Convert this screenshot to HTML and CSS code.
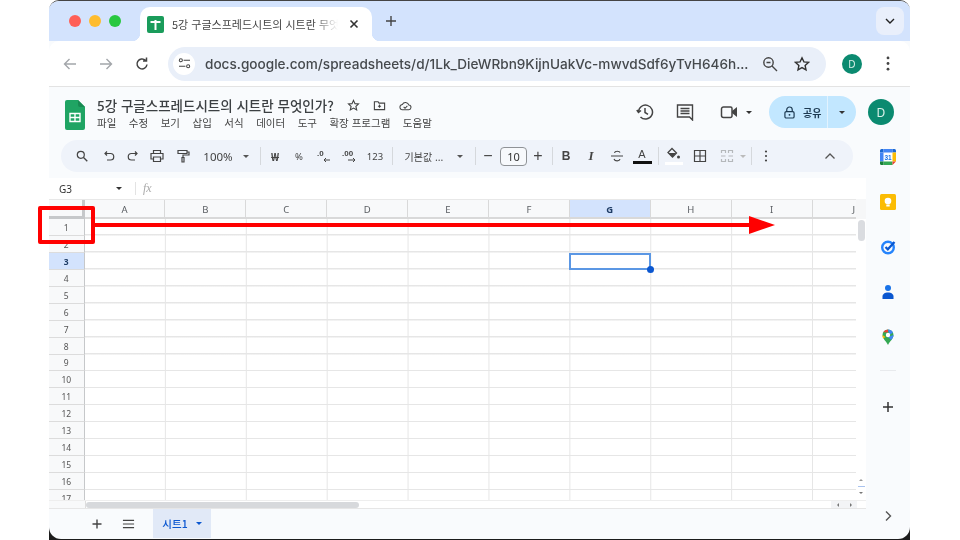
FILE: index.html
```html
<!DOCTYPE html>
<html lang="ko">
<head>
<meta charset="utf-8">
<title>5강 구글스프레드시트의 시트란 무엇인가?</title>
<link rel="stylesheet" href="styles.css">
</head>
<body>
<div class="screen">
  <div class="window">
    <div class="tabstrip">
      <div class="lights"><i class="light red"></i><i class="light yellow"></i><i class="light green"></i></div>
      <div class="tab">
        <svg class="favicon" viewBox="0 0 17 17"><rect width="17" height="17" rx="2" fill="#1a9c5b"/><path d="M3.5 6h10M8.5 4v10" stroke="#fff" stroke-width="2" fill="none"/></svg>
        <span class="tab-title">5강 구글스프레드시트의 시트란 무엇인가?</span>
        <svg class="tab-close" viewBox="0 0 10 10"><path d="M1.5 1.5l7 7M8.5 1.5l-7 7" stroke="#333" stroke-width="1.6" fill="none"/></svg>
      </div>
      <svg class="tab-new" viewBox="0 0 12 12"><path d="M6 1v10M1 6h10" stroke="#444" stroke-width="1.4" fill="none"/></svg>
      <div class="tab-menu"><svg viewBox="0 0 10 6"><path d="M1 1l4 4 4-4" stroke="#222" stroke-width="1.4" fill="none"/></svg></div>
    </div>

    <div class="navbar">
      <svg class="nav-ico" viewBox="0 0 16 16"><path d="M14 8H2.5M7.5 3l-5 5 5 5" stroke="#a3a6aa" stroke-width="1.4" fill="none"/></svg>
      <svg class="nav-ico" viewBox="0 0 16 16"><path d="M2 8h11.5M8.500 3l5 5-5 5" stroke="#a3a6aa" stroke-width="1.4" fill="none"/></svg>
      <svg class="nav-ico" viewBox="0 0 16 16"><path d="M13 8.500a5 5 0 1 1-1.500-4.200M12.500 1.500v3.500H9" stroke="#444" stroke-width="1.5" fill="none"/></svg>
      <div class="omnibox">
        <span class="site-btn"><svg viewBox="0 0 14 12"><circle cx="3" cy="2.500" r="1.700" fill="none" stroke="#444" stroke-width="1.100"/><path d="M6 2.500h7M1 9h7" stroke="#444" stroke-width="1.200"/><circle cx="11" cy="9" r="1.700" fill="none" stroke="#444" stroke-width="1.100"/></svg></span>
        <span class="url">docs.google.com/spreadsheets/d/1Lk_DieWRbn9KijnUakVc-mwvdSdf6yTvH646h...</span>
        <svg class="omni-ico" viewBox="0 0 16 16"><circle cx="6.500" cy="6.500" r="4.700" fill="none" stroke="#444" stroke-width="1.400"/><path d="M10 10l5 5M4.500 6.500h4" stroke="#444" stroke-width="1.400" fill="none"/></svg>
        <svg class="omni-ico" viewBox="0 0 16 16"><path d="M8 1.800l1.900 4.100 4.500.5-3.300 3 .9 4.400L8 11.600l-4 2.200.9-4.400-3.300-3 4.500-.5z" fill="none" stroke="#333" stroke-width="1.400"/></svg>
      </div>
      <span class="avatar small">D</span>
      <svg class="kebab" viewBox="0 0 4 16"><circle cx="2" cy="2" r="1.500" fill="#444"/><circle cx="2" cy="8" r="1.500" fill="#444"/><circle cx="2" cy="14" r="1.500" fill="#444"/></svg>
    </div>

    <div class="app">
      <header class="docbar">
        <svg class="logo" viewBox="0 0 20 30"><path d="M2 0h11l7 7v21a2 2 0 0 1-2 2H2a2 2 0 0 1-2-2V2a2 2 0 0 1 2-2z" fill="#1fa463"/><path d="M13 0l7 7h-5a2 2 0 0 1-2-2z" fill="#188a52"/><path d="M5 13.500h10v8H5zM5 17.500h10M10 13.500v8" fill="none" stroke="#fff" stroke-width="1.400"/></svg>
        <div class="docinfo">
          <div class="titleline">
            <span class="doctitle">5강 구글스프레드시트의 시트란 무엇인가?</span>
            <svg class="title-ico" viewBox="0 0 14 14"><path d="M7 1.500l1.600 3.500 3.800.4-2.800 2.600.8 3.700L7 9.800l-3.400 1.900.8-3.700-2.800-2.600 3.800-.4z" fill="none" stroke="#444" stroke-width="1.200"/></svg>
            <svg class="title-ico" viewBox="0 0 14 14"><path d="M1.500 3h4l1 1.500h6v7h-11zM7 6v3.500M5.300 7.800H8.700" fill="none" stroke="#444" stroke-width="1.200"/></svg>
            <svg class="title-ico" viewBox="0 0 14 14"><path d="M4 11.500a2.800 2.800 0 0 1-.4-5.600 3.700 3.700 0 0 1 7 .6 2.500 2.500 0 0 1-.4 5zM5 8.500l1.500 1.500 2.500-2.500" fill="none" stroke="#444" stroke-width="1.100"/></svg>
          </div>
          <nav class="menubar"><span>파일</span><span>수정</span><span>보기</span><span>삽입</span><span>서식</span><span>데이터</span><span>도구</span><span>확장 프로그램</span><span>도움말</span></nav>
        </div>
        <div class="docactions">
          <svg class="act history" viewBox="0 0 18 18"><path d="M2.500 9a7 7 0 1 1 2 5M.8 7l1.700 2.500L5 7.500M9 5v4.500l3 1.800" fill="none" stroke="#444" stroke-width="1.500"/></svg>
          <svg class="act comment" viewBox="0 0 18 18"><path d="M1.500 2h15v15l-3-3h-12zM4.500 5.500h9M4.500 8h9M4.500 10.500h9" fill="none" stroke="#444" stroke-width="1.400"/></svg>
          <svg class="act video" viewBox="0 0 18 14"><path d="M1.500 4a2 2 0 0 1 2-2h7a1.500 1.500 0 0 1 1.500 1.500V11a1.500 1.500 0 0 1-1.500 1.500h-7a2 2 0 0 1-2-2z" fill="none" stroke="#444" stroke-width="1.500"/><path d="M12 6l5-4v10l-5-4z" fill="#444"/></svg>
          <i class="caret dark video-caret"></i>
          <div class="share">
            <span class="share-main">
              <svg viewBox="0 0 12 14"><path d="M3 6V4a3 3 0 0 1 6 0v2" fill="none" stroke="#1d3a52" stroke-width="1.300"/><rect x="1" y="6" width="10" height="7" rx="1.500" fill="none" stroke="#1d3a52" stroke-width="1.300"/><circle cx="6" cy="9.500" r="1" fill="#1d3a52"/></svg>
              공유
            </span>
            <span class="share-more"><i class="caret dark"></i></span>
          </div>
          <span class="avatar big">D</span>
        </div>
      </header>

      <div class="body">
        <main class="main">
          <div class="toolbar">
            <span class="tb w26"><svg class="ic" viewBox="0 0 12 12"><circle cx="4.800" cy="4.800" r="3.500" fill="none" stroke="#444" stroke-width="1.200"/><path d="M7.500 7.500l3.800 3.800" stroke="#444" stroke-width="1.300"/></svg></span>
            <span class="tb w27"><svg class="ic" viewBox="0 0 12 12"><path d="M2 3.500h5.500a2.500 2.500 0 0 1 0 6.500H4M4 1.500l-2 2 2 2" fill="none" stroke="#444" stroke-width="1.200"/></svg></span>
            <span class="tb w22"><svg class="ic" viewBox="0 0 12 12"><path d="M10 3.500H4.500a2.500 2.500 0 0 0 0 6.500H8M8 1.500l2 2-2 2" fill="none" stroke="#444" stroke-width="1.200"/></svg></span>
            <span class="tb w26"><svg class="ic big" viewBox="0 0 14 14"><path d="M3.500 4V1.500h7V4M3.500 10H1V4.500h12V10h-2.500M3.500 8h7v4.500h-7z" fill="none" stroke="#444" stroke-width="1.200"/></svg></span>
            <span class="tb w26"><svg class="ic big" viewBox="0 0 14 14"><path d="M2 1.500h9v3H2zM11 3h2v3H7v2.500M6 8.500h2v4.500H6z" fill="none" stroke="#444" stroke-width="1.200"/></svg></span>
            <span class="tb w44 label">100%</span>
            <span class="tb w12"><i class="caret"></i></span>
            <span class="tb w16"><i class="sep"></i></span>
            <span class="tb w14 label tiny strong">₩</span>
            <span class="tb w34 label tiny">%</span>
            <span class="tb w16"><svg class="ic dec" viewBox="0 0 16 14"><text x="1" y="7" class="dec-text">.0</text><path d="M14 11H8M10 9l-2 2 2 2" fill="none" stroke="#444"/></svg></span>
            <span class="tb w36"><svg class="ic dec" viewBox="0 0 16 14"><text x="0" y="7" class="dec-text">.00</text><path d="M6 11h7M11 9l2 2-2 2" fill="none" stroke="#444"/></svg></span>
            <span class="tb w14 label tiny">123</span>
            <span class="tb w20"><i class="sep"></i></span>
            <span class="tb w44 label font">기본값 ...</span>
            <span class="tb w28"><i class="caret"></i></span>
            <span class="tb w2"><i class="sep"></i></span>
            <span class="tb w24 sym">−</span>
            <span class="tb w27"><span class="sizebox">10</span></span>
            <span class="tb w22 sym">+</span>
            <span class="tb w6"><i class="sep"></i></span>
            <span class="tb w22 fmt bold">B</span>
            <span class="tb w28 fmt italic">I</span>
            <span class="tb w24"><svg class="ic big" viewBox="0 0 14 14"><path d="M1 7h12M10 3.500C9.500 2 5 1.500 4.500 4M4 10c1 2.500 5.500 2.500 6 0" fill="none" stroke="#444" stroke-width="1.200"/></svg></span>
            <span class="tb w26"><span class="color-a">A</span></span>
            <span class="tb w6"><i class="sep"></i></span>
            <span class="tb w26"><svg class="ic fill" viewBox="0 0 18 18"><path d="M7 1.500l4.500 4.500-4 4-4.500-4.500z" fill="none" stroke="#444" stroke-width="1.300"/><path d="M3.500 6h7.500l-3.500 4z" fill="#444"/><circle cx="13.500" cy="10" r="1.500" fill="#444"/><rect y="15" width="18" height="3" fill="#fff"/></svg></span>
            <span class="tb w26"><svg class="ic big" viewBox="0 0 14 14"><path d="M1.500 1.500h11v11h-11zM1.500 7h11M7 1.500v11" fill="none" stroke="#444" stroke-width="1.200"/></svg></span>
            <span class="tb w28"><svg class="ic big" viewBox="0 0 14 14"><path d="M1.500 4V1.500h4V4M8.500 4V1.500h4V4M1.500 10v2.500h4V10M8.500 10v2.500h4V10M1 7h4.500M8.500 7H13" fill="none" stroke="#b5b8bb" stroke-width="1.200"/></svg></span>
            <span class="tb w4"><i class="caret pale"></i></span>
            <span class="tb w12"><i class="sep"></i></span>
            <span class="tb w18"><svg class="ic dots" viewBox="0 0 4 12"><circle cx="2" cy="1.500" r="1.100" fill="#444"/><circle cx="2" cy="6" r="1.100" fill="#444"/><circle cx="2" cy="10.500" r="1.100" fill="#444"/></svg></span>
            <span class="tb w26 collapse"><svg class="ic" viewBox="0 0 12 8"><path d="M1.500 6.500L6 2l4.500 4.500" fill="none" stroke="#555" stroke-width="1.300"/></svg></span>
          </div>

          <div class="formula">
            <span class="cellname">G3</span>
            <i class="caret dark"></i>
            <i class="sep"></i>
            <span class="fx">fx</span>
          </div>

          <div class="gridwrap">
            <div class="grid">
              <div class="colhead">
                <span class="corner"></span>
                <span class="col">A</span><span class="col">B</span><span class="col">C</span><span class="col">D</span><span class="col">E</span><span class="col">F</span><span class="col on">G</span><span class="col">H</span><span class="col">I</span><span class="col last">J</span>
              </div>
              <div class="rows">
                <div class="row"><span class="rowno">1</span><span class="cells"></span></div>
                <div class="row"><span class="rowno">2</span><span class="cells"></span></div>
                <div class="row"><span class="rowno on">3</span><span class="cells"></span></div>
                <div class="row"><span class="rowno">4</span><span class="cells"></span></div>
                <div class="row"><span class="rowno">5</span><span class="cells"></span></div>
                <div class="row"><span class="rowno">6</span><span class="cells"></span></div>
                <div class="row"><span class="rowno">7</span><span class="cells"></span></div>
                <div class="row"><span class="rowno">8</span><span class="cells"></span></div>
                <div class="row"><span class="rowno">9</span><span class="cells"></span></div>
                <div class="row"><span class="rowno">10</span><span class="cells"></span></div>
                <div class="row"><span class="rowno">11</span><span class="cells"></span></div>
                <div class="row"><span class="rowno">12</span><span class="cells"></span></div>
                <div class="row"><span class="rowno">13</span><span class="cells"></span></div>
                <div class="row"><span class="rowno">14</span><span class="cells"></span></div>
                <div class="row"><span class="rowno">15</span><span class="cells"></span></div>
                <div class="row"><span class="rowno">16</span><span class="cells"></span></div>
                <div class="row"><span class="rowno">17</span><span class="cells"></span></div>
                <div class="selection"><i class="handle"></i></div>
              </div>
            </div>
            <div class="vscroll">
              <span class="vtop"></span>
              <span class="vthumb"></span>
              <span class="varrows"><i class="tri up"></i><i class="vline"></i><i class="tri down"></i></span>
            </div>
          </div>

          <div class="hscroll">
            <span class="hlead"></span>
            <span class="hthumb"></span>
            <span class="harrows"><i class="tri left"></i><i class="tri right"></i></span>
          </div>

          <div class="sheetbar">
            <svg class="sb-ico" viewBox="0 0 12 12"><path d="M6 1.500v9M1.500 6h9" stroke="#444" stroke-width="1.400" fill="none"/></svg>
            <svg class="sb-ico" viewBox="0 0 14 12"><path d="M1 2h12M1 6h12M1 10h12" stroke="#444" stroke-width="1.300" fill="none"/></svg>
            <div class="sheettab">시트1 <i class="caret blue"></i></div>
          </div>
        </main>

        <aside class="side">
          <svg class="addon" viewBox="0 0 16 16"><rect width="16" height="16" rx="1.500" fill="#fff"/><path d="M3.500 0H1.500A1.500 1.500 0 0 0 0 1.500V3.500h3.500z" fill="#1967d2"/><path d="M3.500 0h9v3.500h-9zM0 3.500h3.500v9H0z" fill="#4285f4"/><path d="M12.500 0H14.500A1.500 1.500 0 0 1 16 1.500V3.500h-3.500z" fill="#1967d2"/><path d="M12.500 3.500H16v9h-3.500z" fill="#fbbc04"/><path d="M3.500 12.500h9V16h-9z" fill="#34a853"/><path d="M0 12.500h3.500V16H1.500A1.500 1.500 0 0 1 0 14.500z" fill="#188038"/><path d="M12.500 12.500H16L12.500 16z" fill="#ea4335"/><text x="8" y="10.500" class="cal-text">31</text></svg>
          <svg class="addon" viewBox="0 0 16 16"><rect width="16" height="16" rx="1.500" fill="#fbbc04"/><circle cx="8" cy="7" r="3.300" fill="#fff"/><rect x="6.300" y="10.500" width="3.400" height="2" fill="#fff"/></svg>
          <svg class="addon" viewBox="0 0 16 16"><circle cx="8" cy="8.500" r="5.800" fill="none" stroke="#2684fc" stroke-width="2.400"/><path d="M5.500 8l2.300 2.300L14.500 3" fill="none" stroke="#0b57d0" stroke-width="2.200"/></svg>
          <svg class="addon" viewBox="0 0 16 16"><circle cx="8" cy="4" r="3" fill="#1a73e8"/><path d="M2.500 15v-2.500C2.500 10 5 8.500 8 8.500s5.500 1.500 5.500 4V15z" fill="#0b57d0"/></svg>
          <svg class="addon" viewBox="0 0 16 16"><path d="M8 16C6.500 12.500 2.500 10 2.500 6a5.500 5.500 0 0 1 11 0C13.500 10 9.500 12.500 8 16z" fill="#34a853"/><path d="M3.200 3.300A5.500 5.500 0 0 1 8 .5v3z" fill="#ea4335"/><path d="M8 .5a5.500 5.500 0 0 1 5 3.200l-3.500 2z" fill="#4285f4"/><path d="M13.500 6c0 2-1 3.500-2.300 5L8 8z" fill="#4285f4"/><path d="M2.500 6l3 2 -2.500 1.500C2.700 8.500 2.500 7 2.500 6z" fill="#fbbc04"/><circle cx="8" cy="6" r="2.200" fill="#fff"/></svg>
          <i class="side-rule"></i>
          <svg class="addon plus" viewBox="0 0 12 12"><path d="M6 1v10M1 6h10" stroke="#333" stroke-width="1.500" fill="none"/></svg>
          <svg class="side-more" viewBox="0 0 8 12"><path d="M2 1.500L6.500 6 2 10.500" stroke="#555" stroke-width="1.400" fill="none"/></svg>
        </aside>
      </div>
    </div>
  </div>
</div>

<div class="redbox"></div>
<svg class="redarrow" viewBox="0 0 690 20" aria-hidden="true"><path d="M0 10h656" stroke="#f00" stroke-width="4"/><path d="M654 1l26 9-26 9z" fill="#f00"/></svg>
</body>
</html>
```
FILE: styles.css
```css
* { box-sizing: border-box; }
html, body { margin: 0; height: 540px; overflow: hidden; background: #fff; }
body { font-family: "Noto Sans CJK KR", "Noto Sans", sans-serif; color: #444; position: relative; }
i { display: block; font-style: normal; }
svg { display: block; flex: none; }

.screen { width: 861px; height: 540px; margin-left: 49px; background: linear-gradient(#fff 50%, #1c1c1c 50%); filter: blur(.5px); }
.window { width: 861px; height: 539px; border-radius: 10px 10px 12px 12px; overflow: hidden; border-top: 1px solid #444; background: #f9fbfd; display: flex; flex-direction: column; }

/* tab strip */
.tabstrip { height: 40px; flex: none; background: #d3e3fd; display: flex; align-items: flex-start; position: relative; }
.lights { display: flex; gap: 8px; padding: 14px 0 0 19.500px; width: 91px; }
.light { width: 12px; height: 12px; border-radius: 50%; }
.red { background: #ff5f57; } .yellow { background: #febc2e; } .green { background: #28c840; }
.tab { width: 232px; height: 34px; margin-top: 6px; background: #fff; border-radius: 10px 10px 0 0; display: flex; align-items: center; padding: 0 13px 0 7px; position: relative; }
.tab::before, .tab::after { content: ""; position: absolute; bottom: 0; width: 8px; height: 8px; }
.tab::before { left: -8px; background: radial-gradient(circle at 0 0, #d3e3fd 8px, #fff 8.5px); }
.tab::after { right: -8px; background: radial-gradient(circle at 100% 0, #d3e3fd 8px, #fff 8.5px); }
.favicon { width: 17px; height: 17px; margin-right: 8px; }
.tab-title { width: 167px; font-size: 11px; line-height: 16px; color: #444; white-space: nowrap; overflow: hidden; -webkit-mask-image: linear-gradient(90deg, #000 85%, transparent); mask-image: linear-gradient(90deg, #000 85%, transparent); }
.tab-close { width: 10px; height: 10px; margin-left: 11px; }
.tab-new { width: 12px; height: 12px; margin: 14px 0 0 13px; }
.tab-menu { width: 28px; height: 28px; margin: 6px 6px 0 auto; background: #e9effb; border-radius: 8px; display: flex; align-items: center; justify-content: center; }
.tab-menu svg { width: 10px; height: 6px; }

/* nav bar */
.navbar { height: 46px; flex: none; background: #fff; border-bottom: 1px solid #e3e3e3; border-radius: 10px 10px 0 0; display: flex; align-items: center; padding: 0 20px 0 13px; }
.nav-ico { width: 16px; height: 16px; margin-right: 20px; }
.nav-ico:nth-child(3) { margin-right: 18px; }
.omnibox { width: 658px; height: 34px; border-radius: 17px; background: #e9eff9; display: flex; align-items: center; padding: 0 0 0 5px; margin-right: 16px; }
.site-btn { width: 22px; height: 22px; border-radius: 50%; background: #fff; display: flex; align-items: center; justify-content: center; margin-right: 10px; }
.site-btn svg { width: 13px; height: 11px; }
.url { font-family: Inter, "Liberation Sans", sans-serif; font-size: 13.600px; font-weight: 500; color: #45494d; white-space: nowrap; width: 557px; flex: none; }
.omni-ico { width: 16px; height: 16px; margin-right: 16px; flex: none; }
.avatar { display: flex; align-items: center; justify-content: center; border-radius: 50%; background: #0b8a70; color: #d9f1e9; font-family: "Noto Sans", sans-serif; flex: none; }
.avatar.small { width: 20px; height: 20px; font-size: 10px; }
.kebab { width: 4px; height: 15px; margin-left: 24px; }

/* doc header */
.docbar { height: 50px; flex: none; display: flex; align-items: flex-start; padding: 13px 16px 0 16px; }
.logo { width: 20px; height: 30px; margin-right: 12px; }
.docinfo { display: flex; flex-direction: column; }
.titleline { display: flex; align-items: center; height: 17px; margin-top: -3px; }
.doctitle { font-size: 13.500px; line-height: 17px; font-weight: 500; color: #3c4043; white-space: nowrap; width: 250px; }
.title-ico { width: 13px; height: 13px; margin-right: 13px; }
.menubar { display: flex; gap: 12.500px; font-size: 10.500px; line-height: 14px; color: #444; margin-top: 2px; white-space: nowrap; }
.docactions { margin-left: auto; display: flex; align-items: center; height: 32px; margin-top: -4px; }
.act.history { width: 18px; height: 18px; margin-right: 22px; }
.act.comment { width: 18px; height: 18px; margin-right: 26px; }
.act.video { width: 18px; height: 14px; }
.video-caret { margin: 0 17px 0 8px; }
.share { width: 87px; height: 32px; border-radius: 16px; background: #c2e7ff; display: flex; align-items: center; color: #1d3a52; }
.share-main { width: 59px; height: 32px; display: flex; align-items: center; padding-left: 15px; gap: 8px; font-size: 10px; font-weight: 700; border-right: 1px solid #e2f3ff; }
.share-main svg { width: 11px; height: 13px; }
.share-more { flex: 1; display: flex; justify-content: center; }
.avatar.big { width: 26px; height: 26px; font-size: 12px; margin-left: 12px; }

.caret { width: 0; height: 0; border: 3px solid transparent; border-top: 3.500px solid #555; border-bottom: 0; }
.caret.dark { border-top-color: #333; }
.caret.pale { border-top-color: #bbb; }
.caret.blue { border-top-color: #0b57d0; }

/* body */
.body { flex: 1; min-height: 0; display: flex; }
.main { width: 817px; flex: none; display: flex; flex-direction: column; }
.side { flex: 1; display: flex; flex-direction: column; align-items: center; padding-top: 12px; position: relative; }
.addon { width: 16px; height: 16px; margin-bottom: 29px; }
.addon:nth-child(5) { margin-bottom: 0; }
.cal-text { font: 700 6.500px "Liberation Sans", sans-serif; fill: #1a73e8; text-anchor: middle; }
.side-rule { width: 16px; height: 1px; background: #e8eaed; margin: 25px 0 30px; }
.addon.plus { width: 12px; height: 12px; }
.side-more { width: 8px; height: 12px; margin-top: auto; margin-bottom: 16px; }

/* toolbar */
.toolbar { height: 32px; margin: 3px 0 0 12px; width: 792px; background: #eff3fa; border-radius: 16px; display: flex; align-items: center; padding: 0 10px 0 8px; flex: none; }
.tb { display: flex; align-items: center; justify-content: center; height: 32px; flex: none; overflow: visible; }
.w2 { width: 2px; } .w4 { width: 4px; } .w6 { width: 6px; } .w12 { width: 12px; } .w14 { width: 14px; } .w16 { width: 16px; } .w18 { width: 18px; } .w20 { width: 20px; } .w22 { width: 22px; } .w24 { width: 24px; } .w26 { width: 26px; } .w27 { width: 27px; } .w28 { width: 28px; } .w34 { width: 34px; } .w36 { width: 36px; } .w44 { width: 44px; }
.ic { width: 12px; height: 12px; }
.ic.big { width: 14px; height: 14px; }
.ic.dec { width: 16px; height: 14px; overflow: visible; }
.ic.fill { width: 18px; height: 18px; flex: none; }
.ic.dots { width: 4px; height: 12px; }
.dec-text { font: 700 8px "Liberation Sans", sans-serif; fill: #444; }
.collapse { margin-left: auto; }
.label { font-family: "Noto Sans", sans-serif; font-size: 11.500px; color: #444; white-space: nowrap; }
.label.tiny { font-size: 9.500px; }
.label.strong { font-weight: 700; font-size: 11px; }
.label.font { font-family: "Noto Sans CJK KR", sans-serif; font-size: 10px; }
.sep { width: 1px; height: 18px; background: #d5d8dc; flex: none; }
.sym { font: 400 16px "Liberation Sans", sans-serif; color: #444; }
.sizebox { width: 27px; height: 19px; border: 1px solid #8f9296; border-radius: 4px; display: flex; align-items: center; justify-content: center; font: 11px "Noto Sans", sans-serif; color: #333; background: #f7f9fc; }
.fmt { font: 700 12px "Liberation Serif", serif; color: #444; }
.fmt.bold { font-family: "Liberation Sans", sans-serif; }
.fmt.italic { font: italic 700 13px "Liberation Serif", serif; }
.color-a { font: 11px/13px "Liberation Sans", sans-serif; color: #444; width: 19px; text-align: center; border-bottom: 3px solid #111; }

/* formula */
.formula { height: 21px; margin-top: 6px; background: #fff; display: flex; align-items: center; flex: none; padding-left: 10px; }
.cellname { width: 57px; font: 10px "Noto Sans", sans-serif; color: #333; }
.formula .caret { margin-right: 13px; }
.formula .sep { height: 13px; background: #e3e3e3; margin-right: 7px; }
.fx { font: italic 12px "Liberation Serif", serif; color: #aaa; }

/* grid */
.gridwrap { height: 301px; flex: none; display: flex; background: #fff; overflow: hidden; }
.grid { width: 807px; flex: none; display: flex; flex-direction: column; }
.colhead { height: 20px; flex: none; display: flex; background: #f8f9fa; border-top: 1px solid #e8e8e8; }
.corner { width: 35.500px; flex: none; border-right: 3px solid #c6c8ca; border-bottom: 3px solid #c6c8ca; }
.col { width: 80.900px; flex: none; display: flex; align-items: center; justify-content: center; padding-top: 1px; font: 9.500px "Noto Sans", sans-serif; color: #5a5e62; border-right: 1px solid #d9d9d9; border-bottom: 2px solid #d9d9d9; }
.col.on { background: #d3e3fd; color: #1f3d66; font-weight: 700; }
.col.last { width: auto; flex: 1; border-right: 0; justify-content: flex-end; padding-right: 1px; }
.rows { flex: 1; position: relative; overflow: hidden; }
.row { height: 16.950px; display: flex; }
.rowno { width: 35.500px; flex: none; display: flex; align-items: center; justify-content: center; padding-top: 1px; font: 8.500px "Noto Sans", sans-serif; color: #555; background: #f8f9fa; border-right: 1px solid #c6c8ca; border-bottom: 1px solid #dcdcdc; }
.rowno.on { background: #d3e3fd; color: #1f3d66; font-weight: 700; }
.cells { flex: 1; background: linear-gradient(#e6e6e6, #e6e6e6) 0 100% / 100% 1.500px no-repeat, linear-gradient(90deg, transparent 79.500px, #e6e6e6 79.500px, #e6e6e6 81px) 0 0 / 80.900px 100% repeat-x; }
.selection { position: absolute; left: 520px; top: 33.500px; width: 81.500px; height: 17.500px; border: 2px solid #5b97e4; }
.handle { position: absolute; right: -5px; bottom: -5px; width: 7px; height: 7px; border-radius: 50%; background: #0b57d0; }

.vscroll { flex: 1; display: flex; flex-direction: column; align-items: center; background: #fff; }
.vtop { width: 100%; height: 20px; background: #f6f7f8; flex: none; }
.vthumb { width: 7px; height: 21px; border-radius: 4px; background: #dadce0; margin-top: 1px; }
.varrows { margin-top: auto; display: flex; flex-direction: column; align-items: center; gap: 5px; padding-bottom: 6px; }
.vline { width: 7px; height: 1px; background: #a9c3ee; }
.tri { width: 0; height: 0; border: 2.500px solid transparent; }
.tri.up { border-top: 0; border-bottom-color: #999; }
.tri.down { border-bottom: 0; border-top-color: #777; }
.tri.left { border-left: 0; border-right-color: #777; }
.tri.right { border-right: 0; border-left-color: #777; }

.hscroll { height: 9px; flex: none; background: #fff; border-bottom: 1px solid #e6e6e6; border-top: 1px solid #eee; display: flex; align-items: center; }
.hlead { width: 37px; height: 100%; background: #f8f9fa; border-right: 1px solid #ddd; flex: none; }
.hthumb { width: 273px; height: 6px; border-radius: 3px; background: #d7d9dc; }
.harrows { margin-left: auto; width: 26px; margin-right: 9px; height: 100%; background: #f3f4f6; display: flex; align-items: center; justify-content: space-around; }

.sheetbar { flex: 1; display: flex; align-items: flex-start; }
.sb-ico { width: 12px; height: 12px; margin-top: 9px; }
.sb-ico:first-child { margin-left: 42px; margin-right: 19px; }
.sb-ico:nth-child(2) { width: 13px; margin-right: 18px; }
.sheettab { width: 58px; height: 29px; background: #e1e9f7; display: flex; align-items: center; justify-content: center; gap: 8px; font-size: 10.500px; font-weight: 500; color: #0b57d0; }

/* annotation */
.redbox { position: absolute; left: 38px; top: 206px; width: 57px; height: 38px; border: 4px solid #f00; border-radius: 2px; }
.redarrow { position: absolute; left: 95px; top: 215px; width: 690px; height: 20px; }
```
